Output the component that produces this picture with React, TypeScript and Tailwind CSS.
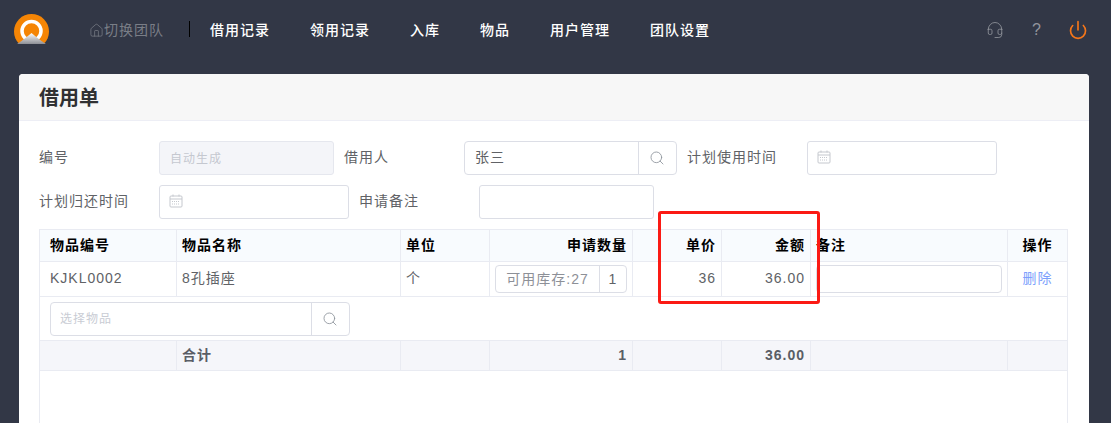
import React from 'react';
import { Headset, House, Power, Search } from 'lucide-react';

const navItems = ['借用记录', '领用记录', '入库', '物品', '用户管理', '团队设置'];

const Logo = () => (
  <svg width="36" height="31" viewBox="0 0 36 31" className="shrink-0">
    <defs>
      <clipPath id="logoClip">
        <rect x="0" y="0" width="36" height="30" />
      </clipPath>
      <linearGradient id="hill" x1="0" y1="0" x2="0" y2="1">
        <stop offset="0" stopColor="#ffffff" />
        <stop offset="1" stopColor="#8d8f96" />
      </linearGradient>
    </defs>
    <g clipPath="url(#logoClip)">
      <circle cx="17.5" cy="17.5" r="17.5" fill="#f58505" />
      <circle cx="17.5" cy="17" r="9.5" fill="none" stroke="#fff" strokeWidth="3.5" />
      <path d="M3 30 C9 26 13 23 17.5 19 C22 23 26 26 32 30 Z" fill="url(#hill)" />
    </g>
  </svg>
);

const CalendarGlyph = () => (
  <svg width="14" height="14" viewBox="0 0 14 14" fill="none" stroke="#c5c8ce" strokeWidth="1">
    <rect x="1" y="2" width="12" height="11" rx="1" />
    <path d="M1 5h12M4 0.5v2M10 0.5v2" />
    <path d="M3 7.5h8M3 10h8" strokeDasharray="1 1" />
  </svg>
);

const DateInput = ({ width }: { width: string }) => (
  <div className={`${width} h-[34px] border border-[#dcdee6] rounded-[3px] flex items-center pl-[9px] pb-[2px]`}>
    <CalendarGlyph />
  </div>
);

const SearchInput = ({ value, placeholder, width, btn }: { value?: string; placeholder?: string; width: string; btn: string }) => (
  <div className={`${width} h-[34px] border border-[#dcdee6] rounded-[4px] flex items-center`}>
    <div className={`flex-1 ${value ? 'pl-[10px] text-[#606266] pb-[2px]' : 'pl-[9px] text-[#c9ccd4] text-[12px] pt-[1px]'}`}>{value || placeholder}</div>
    <div className={`${btn} h-full border-l border-[#dcdee6] flex items-center justify-center pr-[2px]`}>
      <Search size={16} strokeWidth={1.3} className="text-[#8f949c]" />
    </div>
  </div>
);

const Label = ({ children, width }: { children: React.ReactNode; width: string }) => (
  <div className={`${width} text-[#606266] shrink-0 pb-[2px]`}>{children}</div>
);

const rowCols = 'grid grid-cols-[137px_224px_89px_143px_89px_89px_197px_59px]';
const cell = 'border-r border-[#e9ebf2] flex items-center px-[5px]';
const lastCell = 'flex items-center justify-center';

const headers = [
  { t: '物品编号', c: `${cell} pl-[10px]` },
  { t: '物品名称', c: cell },
  { t: '单位', c: cell },
  { t: '申请数量', c: `${cell} justify-end` },
  { t: '单价', c: `${cell} justify-end` },
  { t: '金额', c: `${cell} justify-end` },
  { t: '备注', c: cell },
  { t: '操作', c: lastCell },
];

export default function App() {
  return (
    <div className="relative w-[1111px] h-[423px] overflow-hidden bg-[#323746] text-[14px] tracking-[1px] [font-family:'Liberation_Sans','Noto_Sans_CJK_SC',sans-serif]">
      {/* Top bar */}
      <div className="h-[74px] pl-[14px] flex items-start">
        <div className="mt-[14px]">
          <Logo />
        </div>
        <div className="ml-[39px] mt-[20px] flex items-center h-[20px] text-[#7a7e87]">
          <House size={15} strokeWidth={1.2} />
          <span>切换团队</span>
        </div>
        <div className="ml-[25px] mt-[21px] w-px h-[16px] bg-black" />
        <div className="ml-5 mt-[20px] flex gap-[40px] text-white h-[20px] items-center font-medium">
          {navItems.map((n) => (
            <span key={n}>{n}</span>
          ))}
        </div>
        <div className="ml-auto mr-[23px] mt-[20px] flex items-center h-[20px] text-[#92959d]">
          <Headset size={18} strokeWidth={1.1} />
          <span className="ml-[28px] w-[10px] text-[16px] tracking-normal">?</span>
          <Power size={20} strokeWidth={2} className="ml-[26px] text-[#f5761a]" />
        </div>
      </div>

      {/* Card */}
      <div className="ml-[19px] w-[1070px] h-[349px] bg-white rounded-t-[4px]">
        <div className="h-[47px] bg-[#f7f7f7] border-b border-[#edeef5] rounded-t-[4px] pl-5 pt-[2px] flex items-center text-[20px] font-bold tracking-normal text-[#303133]">
          借用单
        </div>

        <div className="pl-5 pt-5">
          <div className="flex items-center h-[34px]">
            <Label width="w-[120px]">编号</Label>
            <div className="w-[175px] h-[34px] bg-[#f4f5f9] border border-[#e5e7ee] rounded-[3px] flex items-center pl-[10px] pt-[1px] text-[12px] text-[#c5c8d0]">
              自动生成
            </div>
            <Label width="w-[120px] ml-[10px]">借用人</Label>
            <SearchInput value="张三" width="w-[213px]" btn="w-[38px]" />
            <Label width="w-[120px] ml-[10px]">计划使用时间</Label>
            <DateInput width="w-[190px]" />
          </div>
          <div className="flex items-center h-[34px] mt-[10px]">
            <Label width="w-[120px]">计划归还时间</Label>
            <DateInput width="w-[190px]" />
            <Label width="w-[120px] ml-[10px]">申请备注</Label>
            <div className="w-[175px] h-[34px] border border-[#dcdee6] rounded-[3px]" />
          </div>

          {/* Table */}
          <div className="mt-[10px] w-[1029px] h-[200px] border-l border-r border-t border-[#e9ebf2] text-[#606266]">
            <div className={`${rowCols} h-[32px] bg-[#f8fbfe] border-b border-[#e9ebf2] font-bold text-black`}>
              {headers.map((h) => (
                <div key={h.t} className={h.c}>
                  {h.t}
                </div>
              ))}
            </div>

            <div className={`${rowCols} h-[35px] border-b border-[#e9ebf2]`}>
              <div className={`${cell} pl-[10px] pb-[2px]`}>KJKL0002</div>
              <div className={`${cell} pb-[2px]`}>8孔插座</div>
              <div className={`${cell} pb-[2px]`}>个</div>
              <div className={`${cell} justify-end`}>
                <div className="w-[132px] h-[28px] border border-[#dcdee6] rounded-[4px] flex items-center text-[#8d9097]">
                  <div className="w-[104px] h-full flex items-center justify-center border-r border-[#dcdee6] whitespace-nowrap">可用库存:27</div>
                  <div className="flex-1 text-center text-[#606266]">1</div>
                </div>
              </div>
              <div className={`${cell} justify-end pb-[2px]`}>36</div>
              <div className={`${cell} justify-end pb-[2px]`}>36.00</div>
              <div className={cell}>
                <div className="w-full h-[28px] border border-[#dcdee6] rounded-[4px]" />
              </div>
              <div className={`${lastCell} text-[#7d9ffc] pb-[2px]`}>删除</div>
            </div>

            <div className="h-[44px] border-b border-[#e9ebf2] pl-[10px] flex items-center">
              <SearchInput placeholder="选择物品" width="w-[300px]" btn="w-[38px]" />
            </div>

            <div className={`${rowCols} h-[30px] bg-[#f5f6fa] border-b border-[#e9ebf2] font-bold text-[#5a5e66]`}>
              <div className={cell} />
              <div className={cell}>合计</div>
              <div className={cell} />
              <div className={`${cell} justify-end`}>1</div>
              <div className={cell} />
              <div className={`${cell} justify-end`}>36.00</div>
              <div className={cell} />
              <div />
            </div>
          </div>
        </div>
      </div>

      {/* Red annotation box drawn over the screenshot */}
      <div className="absolute left-[658px] top-[211px] w-[162px] h-[93px] border-[3px] border-[#fb1a14] rounded-[3px]" />
    </div>
  );
}
